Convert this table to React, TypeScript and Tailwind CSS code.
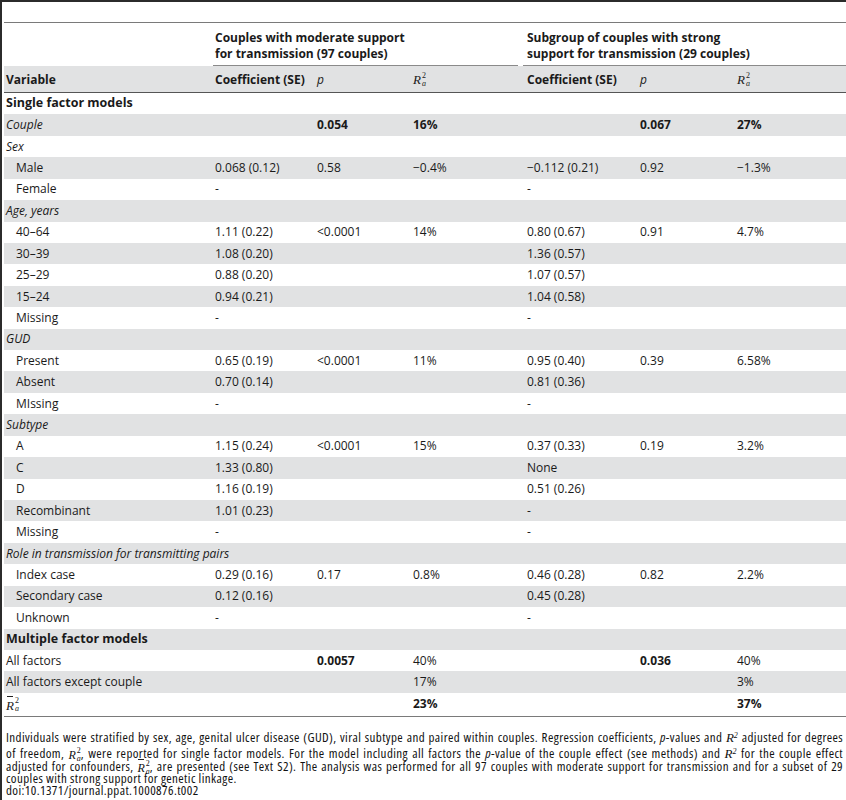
import React from "react";

type Cell = { t: string; b?: boolean };
type Row = {
  label: React.ReactNode;
  kind?: "section" | "cat" | "item" | "plain";
  c?: (Cell | null)[];
  h?: string;
  wide?: boolean;
};

const Ra = ({ bar, size = "text-[13px]" }: { bar?: boolean; size?: string }) => (
  <span className={`inline-flex items-center font-['Liberation_Serif',serif] italic ${size} leading-none align-middle tracking-normal`}>
    <span className="relative">
      R
      {bar && <span className="absolute left-[1px] right-[1px] top-[-3px] h-px bg-[#222]" />}
    </span>
    <span className="inline-flex flex-col text-[8px] leading-[8px] ml-[1px] not-italic">
      <span className="not-italic">2</span>
      <span className="italic">a</span>
    </span>
  </span>
);

const c = (t: string, b?: boolean): Cell => ({ t, b });

const rows: Row[] = [
  { label: "Single factor models", kind: "section" },
  { label: "Couple", kind: "cat", c: [null, c("0.054", true), c("16%", true), null, c("0.067", true), c("27%", true)] },
  { label: "Sex", kind: "cat" },
  { label: "Male", kind: "item", c: [c("0.068 (0.12)"), c("0.58"), c("\u22120.4%"), c("\u22120.112 (0.21)"), c("0.92"), c("\u22121.3%")] },
  { label: "Female", kind: "item", c: [c("-"), null, null, c("-")] },
  { label: "Age, years", kind: "cat" },
  { label: "40\u201364", kind: "item", c: [c("1.11 (0.22)"), c("<0.0001"), c("14%"), c("0.80 (0.67)"), c("0.91"), c("4.7%")] },
  { label: "30\u201339", kind: "item", c: [c("1.08 (0.20)"), null, null, c("1.36 (0.57)")] },
  { label: "25\u201329", kind: "item", c: [c("0.88 (0.20)"), null, null, c("1.07 (0.57)")] },
  { label: "15\u201324", kind: "item", c: [c("0.94 (0.21)"), null, null, c("1.04 (0.58)")] },
  { label: "Missing", kind: "item", c: [c("-"), null, null, c("-")] },
  { label: "GUD", kind: "cat" },
  { label: "Present", kind: "item", c: [c("0.65 (0.19)"), c("<0.0001"), c("11%"), c("0.95 (0.40)"), c("0.39"), c("6.58%")] },
  { label: "Absent", kind: "item", c: [c("0.70 (0.14)"), null, null, c("0.81 (0.36)")] },
  { label: "MIssing", kind: "item", c: [c("-"), null, null, c("-")] },
  { label: "Subtype", kind: "cat" },
  { label: "A", kind: "item", c: [c("1.15 (0.24)"), c("<0.0001"), c("15%"), c("0.37 (0.33)"), c("0.19"), c("3.2%")] },
  { label: "C", kind: "item", c: [c("1.33 (0.80)"), null, null, c("None")] },
  { label: "D", kind: "item", c: [c("1.16 (0.19)"), null, null, c("0.51 (0.26)")] },
  { label: "Recombinant", kind: "item", c: [c("1.01 (0.23)"), null, null, c("-")] },
  { label: "Missing", kind: "item", c: [c("-"), null, null, c("-")] },
  { label: "Role in transmission for transmitting pairs", kind: "cat", wide: true },
  { label: "Index case", kind: "item", c: [c("0.29 (0.16)"), c("0.17"), c("0.8%"), c("0.46 (0.28)"), c("0.82"), c("2.2%")] },
  { label: "Secondary case", kind: "item", c: [c("0.12 (0.16)"), null, null, c("0.45 (0.28)")] },
  { label: "Unknown", kind: "item", c: [c("-"), null, null, c("-")] },
  { label: "Multiple factor models", kind: "section" },
  { label: "All factors", kind: "plain", c: [null, c("0.0057", true), c("40%"), null, c("0.036", true), c("40%")] },
  { label: "All factors except couple", kind: "plain", c: [null, null, c("17%"), null, null, c("3%")] },
  { label: <Ra bar />, kind: "plain", c: [null, null, c("23%", true), null, null, c("37%", true)], h: "h-[23px]" },
];

const grid = "grid grid-cols-[209px_102px_96px_114px_113px_97px_111px]";

const Rsq = () => (
  <>
    <i className="font-['Liberation_Serif',serif] text-[13px] tracking-normal">R</i>
    <sup className="text-[8px] font-['Liberation_Serif',serif] italic">2</sup>
  </>
);

const lineCls = "h-[12px] text-justify [text-align-last:justify]";

export default function App() {
  return (
    <div className="w-[846px] min-h-[800px] bg-white border-l-2 border-[#2b2b2b] font-['Open_Sans',sans-serif] text-[12px] text-[#1a1a1a] overflow-hidden">
      <div className="h-[2px] bg-[#2b2b2b]" />
      <div className="pl-[2px]">
        <div className="h-[20px]" />
        <div className="h-px bg-[#7a7a7a]" />
        {/* group header */}
        <div className={`${grid} h-[43px]`}>
          <div />
          <div className="col-span-3 mr-[7px] border-b border-[#8a8a8a] pl-[2px] pt-[7px] font-bold leading-[16px]">
            Couples with moderate support
            <br />
            for transmission (97 couples)
          </div>
          <div className="col-span-3 ml-[-2px] border-b border-[#8a8a8a] pl-[4px] pt-[7px] font-bold leading-[16px]">
            Subgroup of couples with strong
            <br />
            support for transmission (29 couples)
          </div>
        </div>
        {/* column header */}
        <div className={`${grid} h-[27px] bg-[#e1e2e3] border-b border-[#555] items-center`}>
          <div className="pl-[2px] pt-[1px] font-bold">Variable</div>
          <div className="pl-[2px] pt-[1px] font-bold">Coefficient (SE)</div>
          <div className="pl-[2px] pt-[1px] italic">p</div>
          <div className="pl-[2px]"><Ra /></div>
          <div className="pl-[2px] pt-[1px] font-bold">Coefficient (SE)</div>
          <div className="pl-[2px] pt-[1px] italic">p</div>
          <div className="pl-[2px]"><Ra /></div>
        </div>
        {/* body */}
        {rows.map((r, i) => {
          const gray = i % 2 === 1;
          const labelCls =
            r.kind === "section"
              ? "font-bold text-[12.5px]"
              : r.kind === "cat"
              ? "italic"
              : r.kind === "item"
              ? "pl-[12px]"
              : "";
          return (
            <div
              key={i}
              className={`${grid} ${r.h ?? "h-[21.43px]"} items-center ${gray ? "bg-[#e1e2e3]" : "bg-white"}`}
            >
              <div className={`pl-[2px] whitespace-nowrap ${labelCls} ${r.wide ? "col-span-7" : ""}`}>
                {r.label}
              </div>
              {!r.wide &&
                [0, 1, 2, 3, 4, 5].map((k) => {
                  const cell = r.c?.[k];
                  return (
                    <div key={k} className={`pl-[2px] whitespace-nowrap ${cell?.b ? "font-bold" : ""}`}>
                      {cell ? cell.t : ""}
                    </div>
                  );
                })}
            </div>
          );
        })}
        <div className="h-px bg-[#7a7a7a]" />
        {/* caption */}
        <div className="pt-[14px] pl-[2px] pr-[3px] text-[13px] leading-[12px] font-stretch-semi-condensed tracking-[0.4px] text-[#111]">
          <div className={lineCls}>
            Individuals were stratified by sex, age, genital ulcer disease (GUD), viral subtype and paired within couples. Regression coefficients, <i>p</i>-values and <Rsq /> adjusted for degrees
          </div>
          <div className={`mt-[4px] ${lineCls}`}>
            of freedom, <Ra size="text-[12px]" />, were reported for single factor models. For the model including all factors the <i>p</i>-value of the couple effect (see methods) and <Rsq /> for the couple effect
          </div>
          <div className={`mt-[1px] ${lineCls}`}>
            adjusted for confounders, <Ra bar size="text-[12px]" />, are presented (see Text S2). The analysis was performed for all 97 couples with moderate support for transmission and for a subset of 29
          </div>
          <div className="h-[12px] whitespace-nowrap">couples with strong support for genetic linkage.</div>
          <div className="h-[12px] whitespace-nowrap">doi:10.1371/journal.ppat.1000876.t002</div>
        </div>
      </div>
    </div>
  );
}
